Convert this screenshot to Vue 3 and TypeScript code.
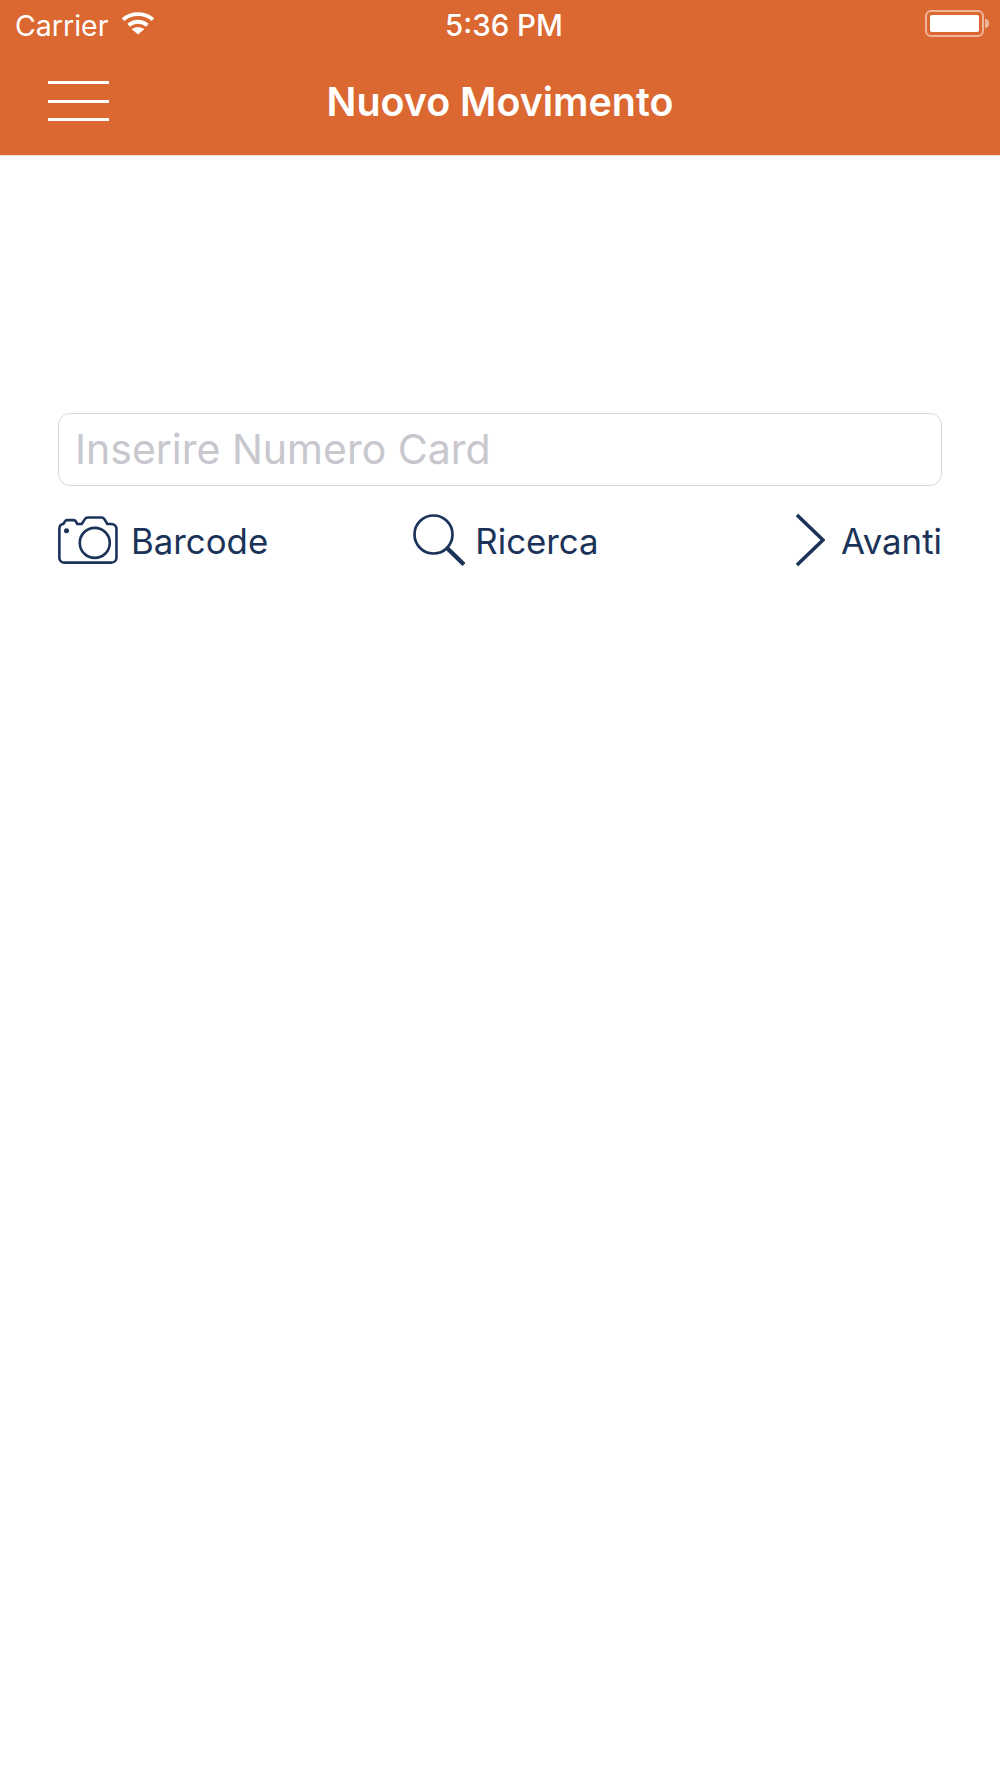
<script setup lang="ts">
const title = 'Nuovo Movimento'
</script>

<template>
  <div class="screen">
    <header class="header">
      <div class="status-bar">
        <div class="status-left">
          <span class="carrier">Carrier</span>
          <svg class="wifi" width="34" height="24" viewBox="0 0 34 24" fill="none" stroke="#fff" stroke-width="3.8">
            <path d="M2 8.6C10.6 1.4 23.4 1.4 32 8.6" />
            <path d="M7.6 14.2C13.2 9.6 20.8 9.6 26.4 14.2" />
            <path d="M17 23.5 L10.8 18.2C14.4 15.6 19.6 15.6 23.2 18.2Z" fill="#fff" stroke="none" />
          </svg>
        </div>
        <span class="clock">5:36 PM</span>
        <div class="battery">
          <div class="battery-body"><div class="battery-fill"></div></div>
          <div class="battery-cap"></div>
        </div>
      </div>
      <div class="nav-bar">
        <button class="menu-btn" type="button" aria-label="Menu">
          <span></span><span></span><span></span>
        </button>
        <h1 class="title">{{ title }}</h1>
      </div>
    </header>

    <main class="content">
      <input class="card-input" type="text" placeholder="Inserire Numero Card" />
      <div class="actions">
        <button class="action action-start" type="button">
          <svg width="60" height="50" viewBox="0 0 62 50" fill="none" stroke="#1b3358" stroke-width="2.7" stroke-linejoin="round">
            <path d="M5.5 8.5L7 6C7.6 5 8.4 4.5 9.6 4.5H16C17.2 4.5 18 5 18.6 6L20 8.5H24.5L27.8 3.4C28.5 2.3 29.4 1.7 30.6 1.7H45C46.2 1.7 47.1 2.2 47.8 3.2L51 8.5H55C58.2 8.5 60.4 10.7 60.4 13.9V43C60.4 46.2 58.2 48.4 55 48.4H6.6C3.4 48.4 1.4 46.2 1.4 43V13.9C1.4 10.7 3 8.5 5.5 8.5Z" />
            <circle cx="38" cy="28" r="15.5" />
            <circle cx="8.8" cy="15.4" r="2.6" fill="#1b3358" stroke="none" />
          </svg>
          <span>Barcode</span>
        </button>
        <button class="action action-center" type="button">
          <svg width="52" height="52" viewBox="0 0 52 52" fill="none" stroke="#1b3358">
            <circle cx="20.5" cy="20.5" r="19" stroke-width="2.7" />
            <path d="M34 34L51 50.5" stroke-width="4.4" />
          </svg>
          <span>Ricerca</span>
        </button>
        <button class="action action-end" type="button">
          <svg width="30" height="54" viewBox="0 0 30 54" fill="none" stroke="#1b3358" stroke-width="3.6">
            <path d="M2 2L28 27L2 52" />
          </svg>
          <span>Avanti</span>
        </button>
      </div>
    </main>
  </div>
</template>

<style>
html,
body {
  margin: 0;
  background: #fff;
}
</style>

<style scoped>
.screen {
  width: 1000px;
  height: 1778px;
  background: #fff;
  font-family: Inter, "Liberation Sans", sans-serif;
  overflow: hidden;
}

.header {
  height: 156px;
  box-sizing: border-box;
  background: #db6731;
  border-bottom: 1px solid #e9e3df;
  color: #fff;
}

.status-bar {
  height: 50px;
  display: grid;
  grid-template-columns: 1fr auto 1fr;
  align-items: center;
  padding: 0 3px 0 15px;
}

.status-left {
  display: flex;
  align-items: center;
  gap: 13px;
}

.carrier {
  font-size: 28.5px;
}

.wifi {
  margin-top: -5px;
}

.clock {
  margin-right: 4px;
  font-size: 29.5px;
  font-weight: 500;
}

.battery {
  justify-self: end;
  display: flex;
  align-items: center;
  gap: 1px;
  margin-right: 8px;
  margin-top: -3px;
}

.battery-body {
  width: 59px;
  height: 27px;
  box-sizing: border-box;
  border: 2px solid #efb598;
  border-radius: 6px;
  padding: 3px;
}

.battery-fill {
  height: 100%;
  background: #fff;
  border-radius: 2px;
}

.battery-cap {
  width: 4px;
  height: 9px;
  background: #efb598;
  border-radius: 0 4px 4px 0;
}

.nav-bar {
  position: relative;
  height: 105px;
  display: flex;
  align-items: center;
  justify-content: center;
}

.menu-btn {
  position: absolute;
  left: 48px;
  top: 31px;
  width: 61px;
  height: 40px;
  padding: 0;
  border: 0;
  background: none;
  display: flex;
  flex-direction: column;
  justify-content: space-between;
}

.menu-btn span {
  display: block;
  height: 3px;
  background: #fff;
}

.title {
  margin: 0 0 2px;
  font-size: 39.4px;
  font-weight: 600;
  line-height: 46px;
}

.content {
  padding: 257px 58px 0;
}

.card-input {
  display: block;
  width: 100%;
  height: 73px;
  box-sizing: border-box;
  padding: 0 16px 2px;
  border: 1px solid #d8d8d8;
  border-radius: 12px;
  outline: none;
  background: #fff;
  font-family: inherit;
  font-size: 41px;
  color: #1b3358;
}

.card-input::placeholder {
  color: #c7c7cd;
  opacity: 1;
}

.actions {
  display: grid;
  grid-template-columns: 1fr auto 1fr;
  align-items: center;
  margin-top: 26px;
}

.action {
  display: flex;
  align-items: center;
  gap: 13px;
  padding: 0;
  border: 0;
  background: none;
  font-family: inherit;
  font-size: 34.8px;
  line-height: 54px;
  color: #1b3358;
}

.action span {
  margin-top: 2px;
}

.action-start {
  justify-self: start;
}

.action-center {
  gap: 10px;
  margin-left: 12px;
}

.action-end {
  gap: 16px;
  justify-self: end;
}
</style>
